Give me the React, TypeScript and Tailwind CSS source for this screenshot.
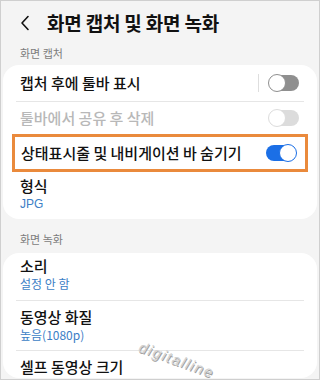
import React from 'react';

const Toggle = ({ on = false, disabled = false }: { on?: boolean; disabled?: boolean }) => {
  if (on) {
    return (
      <div className="relative h-[16px] w-[30px] rounded-full bg-[#1b6fe6]">
        <div className="absolute right-[-1px] top-[-1px] h-[18px] w-[18px] rounded-full border-[1.5px] border-[#1b6fe6] bg-white" />
      </div>
    );
  }
  return (
    <div className={`relative h-[16px] w-[30px] rounded-full ${disabled ? 'bg-[#dcdcdc]' : 'bg-[#8f8f8f]'}`}>
      <div
        className={`absolute left-[-1px] top-[-1px] h-[18px] w-[18px] rounded-full border-[1.5px] bg-white ${
          disabled ? 'border-[#dcdcdc]' : 'border-[#8f8f8f]'
        }`}
      />
    </div>
  );
};

const Divider = () => <div className="mx-[13px] h-px bg-[#e6e6e6]" />;

export default function App() {
  return (
    <div
      className="relative h-[380px] w-[320px] overflow-hidden border border-[#cfcfcf] bg-[#f4f4f4] text-[#111]"
      style={{ fontFamily: '"Noto Sans CJK KR", "Noto Sans", sans-serif' }}
    >
      {/* Header */}
      <div className="flex h-[42px] items-center pl-[19px]">
        <svg width="10" height="16" viewBox="0 0 10 16" className="mt-[1px]">
          <path d="M8 1.5 L2 8 L8 14.5" fill="none" stroke="#111" strokeWidth="1.6" strokeLinecap="round" strokeLinejoin="round" />
        </svg>
        <h1 className="ml-[17px] text-[19px] font-bold leading-none tracking-[-0.2px]">화면 캡처 및 화면 녹화</h1>
      </div>

      <div className="pl-[19px] pt-[2px] text-[11px] leading-[16px] text-[#7c7c7c]">화면 캡처</div>

      {/* Card 1 */}
      <div className="mx-[2px] mt-[4px] rounded-[16px] bg-white pb-[8px]">
        <div className="flex h-[36px] items-center pl-[17px] pr-[18px]">
          <span className="flex-1 text-[15px] font-medium">캡처 후에 툴바 표시</span>
          <div className="mr-[10px] h-[18px] w-px bg-[#dedede]" />
          <Toggle />
        </div>
        <Divider />
        <div className="flex h-[32px] items-center pl-[17px] pr-[18px]">
          <span className="flex-1 text-[15px] font-medium text-[#b8b8b8]">툴바에서 공유 후 삭제</span>
          <Toggle disabled />
        </div>
        <div className="mx-[9px] flex h-[38px] items-center border-[3px] border-[#ea8a3c] pl-[6px] pr-[9px]">
          <span className="flex-1 text-[15px] font-medium">상태표시줄 및 내비게이션 바 숨기기</span>
          <Toggle on />
        </div>
        <div className="pl-[17px] pt-[3px]">
          <div className="text-[15px] font-medium leading-[22px]">형식</div>
          <div className="text-[12px] leading-[14px] text-[#3c7ec6]" style={{ fontFamily: '"Liberation Sans", Arial, sans-serif' }}>
            JPG
          </div>
        </div>
      </div>

      <div className="pl-[19px] pt-[12px] text-[11px] leading-[16px] text-[#7c7c7c]">화면 녹화</div>

      {/* Card 2 */}
      <div className="mx-[2px] mt-[6px] rounded-[16px] bg-white pt-[2px]">
        <div className="pb-[9px] pl-[17px]">
          <div className="text-[15px] font-medium leading-[22px]">소리</div>
          <div className="text-[12px] leading-[14px] text-[#3c7ec6]">설정 안 함</div>
        </div>
        <Divider />
        <div className="pb-[8px] pl-[17px] pt-[5px]">
          <div className="text-[15px] font-medium leading-[22px]">동영상 화질</div>
          <div className="text-[12px] leading-[14px] text-[#3c7ec6]">높음(1080p)</div>
        </div>
        <Divider />
        <div className="pl-[17px] pt-[5px]">
          <div className="text-[15px] font-medium leading-[22px]">셀프 동영상 크기</div>
        </div>
      </div>

      {/* watermark */}
      <div
        className="absolute left-[136px] top-[348px] rotate-[20deg] text-[15px] italic tracking-[1.5px] text-[#d2d2d2]"
        style={{ fontFamily: '"Liberation Sans", Arial, sans-serif', textShadow: '1px 1px 0 #a0a0a0' }}
      >
        digitalline
      </div>
    </div>
  );
}
